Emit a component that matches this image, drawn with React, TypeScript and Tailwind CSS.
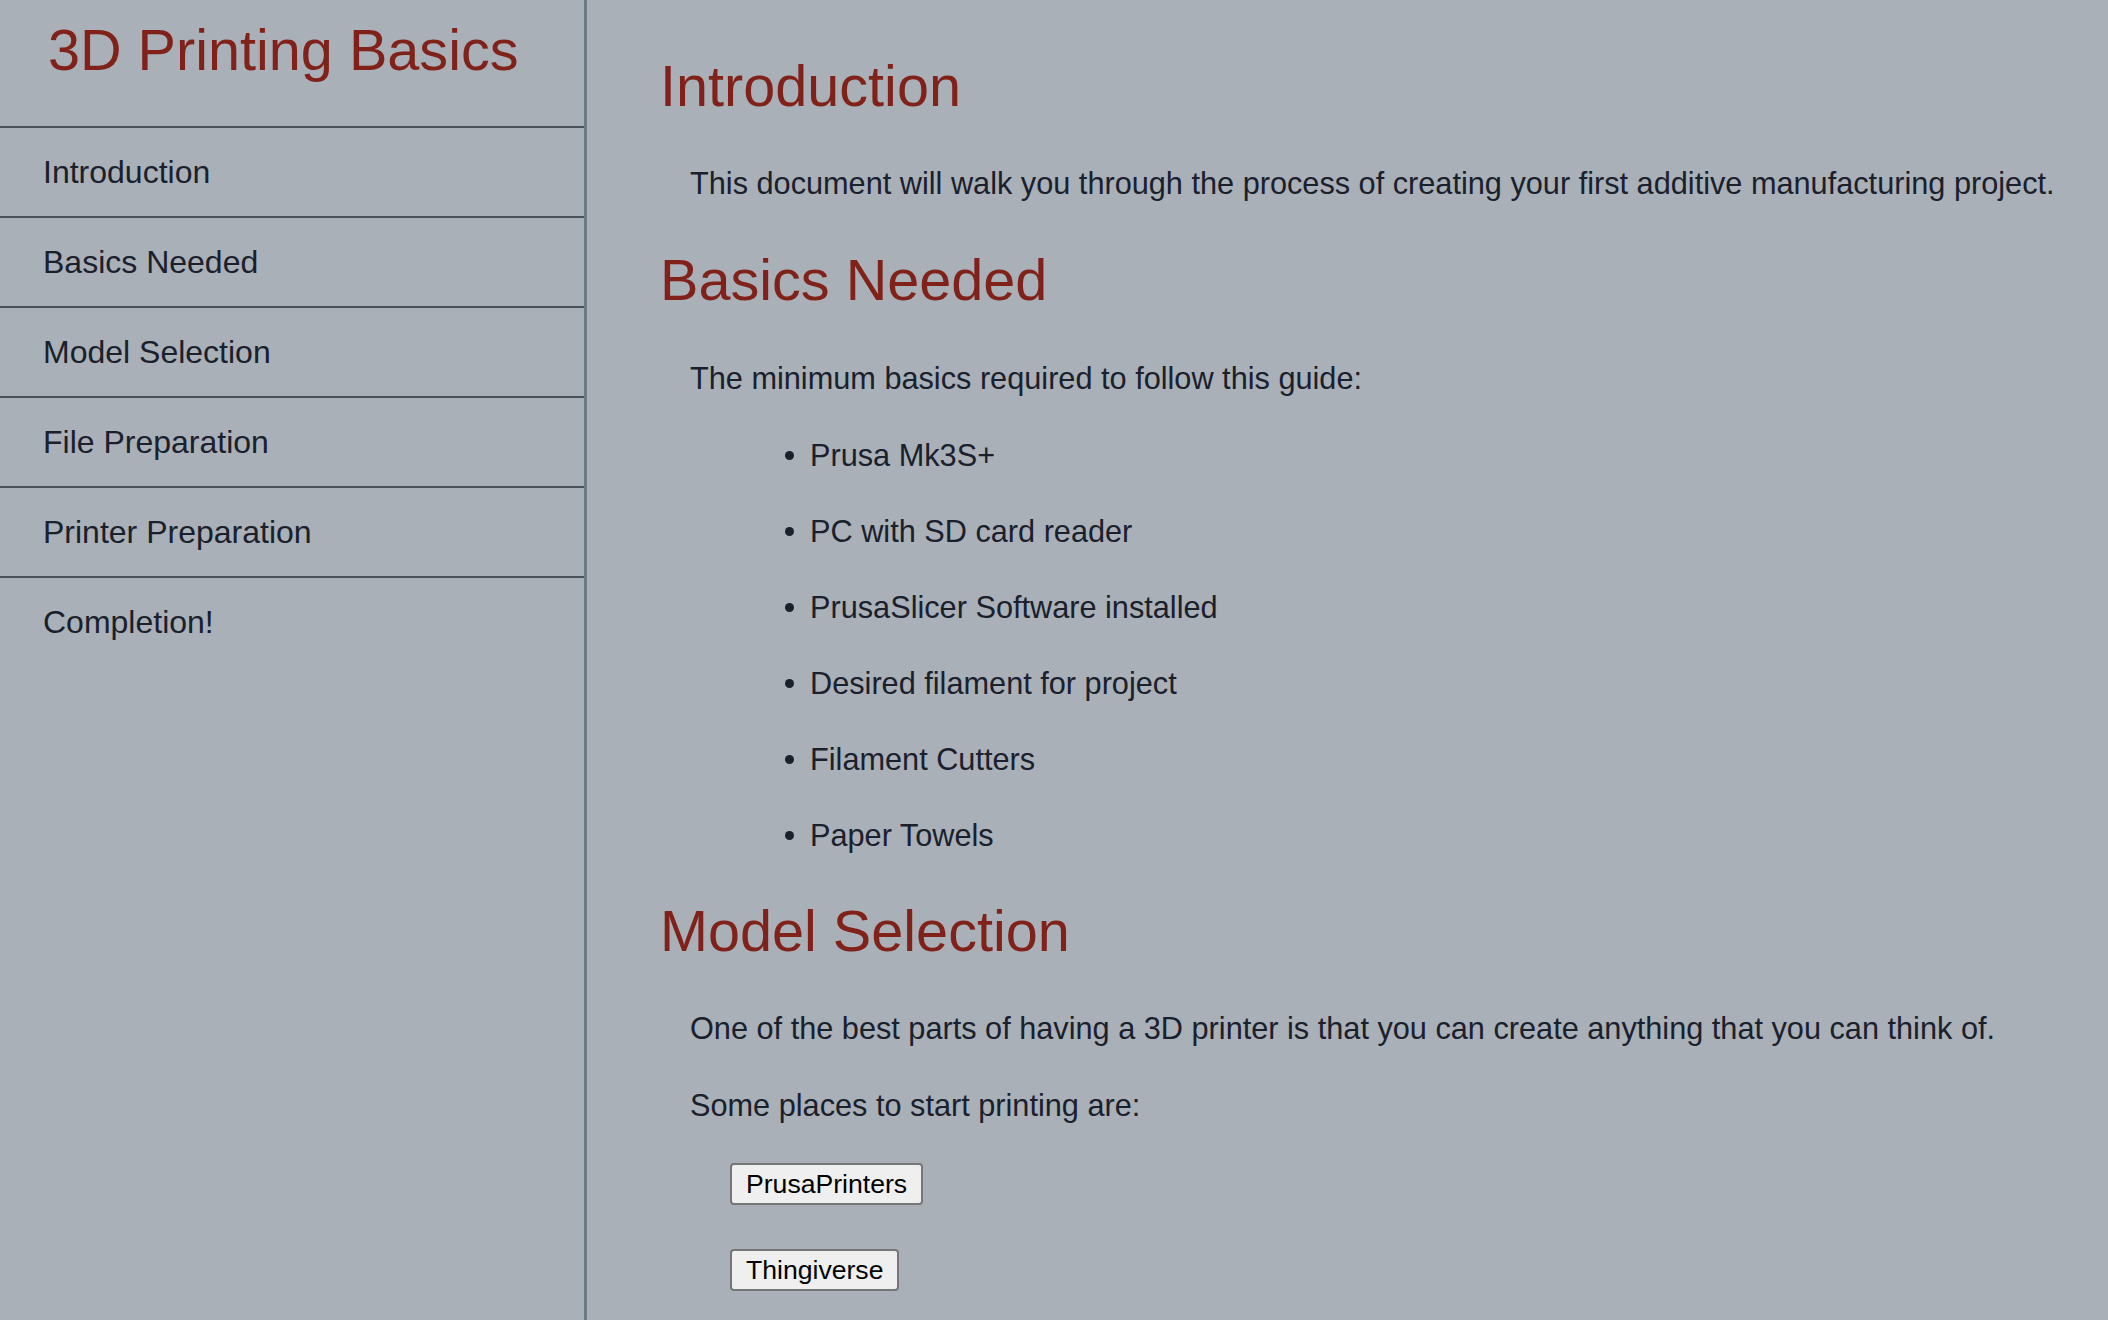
import React from "react";

const navItems = [
  "Introduction",
  "Basics Needed",
  "Model Selection",
  "File Preparation",
  "Printer Preparation",
  "Completion!",
];

const basics = [
  "Prusa Mk3S+",
  "PC with SD card reader",
  "PrusaSlicer Software installed",
  "Desired filament for project",
  "Filament Cutters",
  "Paper Towels",
];

export default function App() {
  return (
    <div className="flex h-[1320px] w-full overflow-hidden bg-[#a9b0b8] font-['Liberation_Sans',Arial,sans-serif] text-[#1a202c]">
      <aside className="flex w-[587px] shrink-0 flex-col border-r-[3px] border-[#6b7a82]">
        <div className="h-[126px] pl-[48px] pt-[17px]">
          <h1 className="text-[57.6px] font-normal leading-[66px] text-[#80221a]">
            3D Printing Basics
          </h1>
        </div>
        <nav className="flex flex-col">
          {navItems.map((item, i) => (
            <a
              key={item}
              href={`#s${i}`}
              className="flex h-[90px] items-center border-t-2 border-[#4a5058] pl-[43px] text-[32px] leading-[36px] text-[#1a202c]"
            >
              {item}
            </a>
          ))}
        </nav>
      </aside>

      <main className="min-w-0 flex-1 pl-[73px] pt-[53px]">
        <h2 className="text-[57.6px] font-normal leading-[66px] text-[#80221a]">
          Introduction
        </h2>
        <p className="mt-[47px] pl-[30px] text-[30.7px] leading-[35px]">
          This document will walk you through the process of creating your first additive manufacturing project.
        </p>

        <h2 className="mt-[46px] text-[57.6px] font-normal leading-[66px] text-[#80221a]">
          Basics Needed
        </h2>
        <p className="mt-[48px] pl-[30px] text-[30.7px] leading-[35px]">
          The minimum basics required to follow this guide:
        </p>
        <ul className="mt-[42px] ml-[125px] flex flex-col gap-[41px]">
          {basics.map((b) => (
            <li key={b} className="flex items-center gap-[16px] text-[30.7px] leading-[35px]">
              <span className="h-[9px] w-[9px] shrink-0 rounded-full bg-[#1a202c]" />
              <span>{b}</span>
            </li>
          ))}
        </ul>

        <h2 className="mt-[45px] text-[57.6px] font-normal leading-[66px] text-[#80221a]">
          Model Selection
        </h2>
        <p className="mt-[47px] pl-[30px] text-[30.7px] leading-[35px]">
          One of the best parts of having a 3D printer is that you can create anything that you can think of.
        </p>
        <p className="mt-[42px] pl-[30px] text-[30.7px] leading-[35px]">
          Some places to start printing are:
        </p>
        <div className="ml-[70px] mt-[40px] flex flex-col items-start gap-[44px]">
          <button className="flex h-[42px] items-center rounded-[4px] border-2 border-[#767676] bg-[#efefef] px-[14px] text-[26.6px] leading-[30px] text-black">
            PrusaPrinters
          </button>
          <button className="flex h-[42px] items-center rounded-[4px] border-2 border-[#767676] bg-[#efefef] px-[14px] text-[26.6px] leading-[30px] text-black">
            Thingiverse
          </button>
        </div>
      </main>
    </div>
  );
}
